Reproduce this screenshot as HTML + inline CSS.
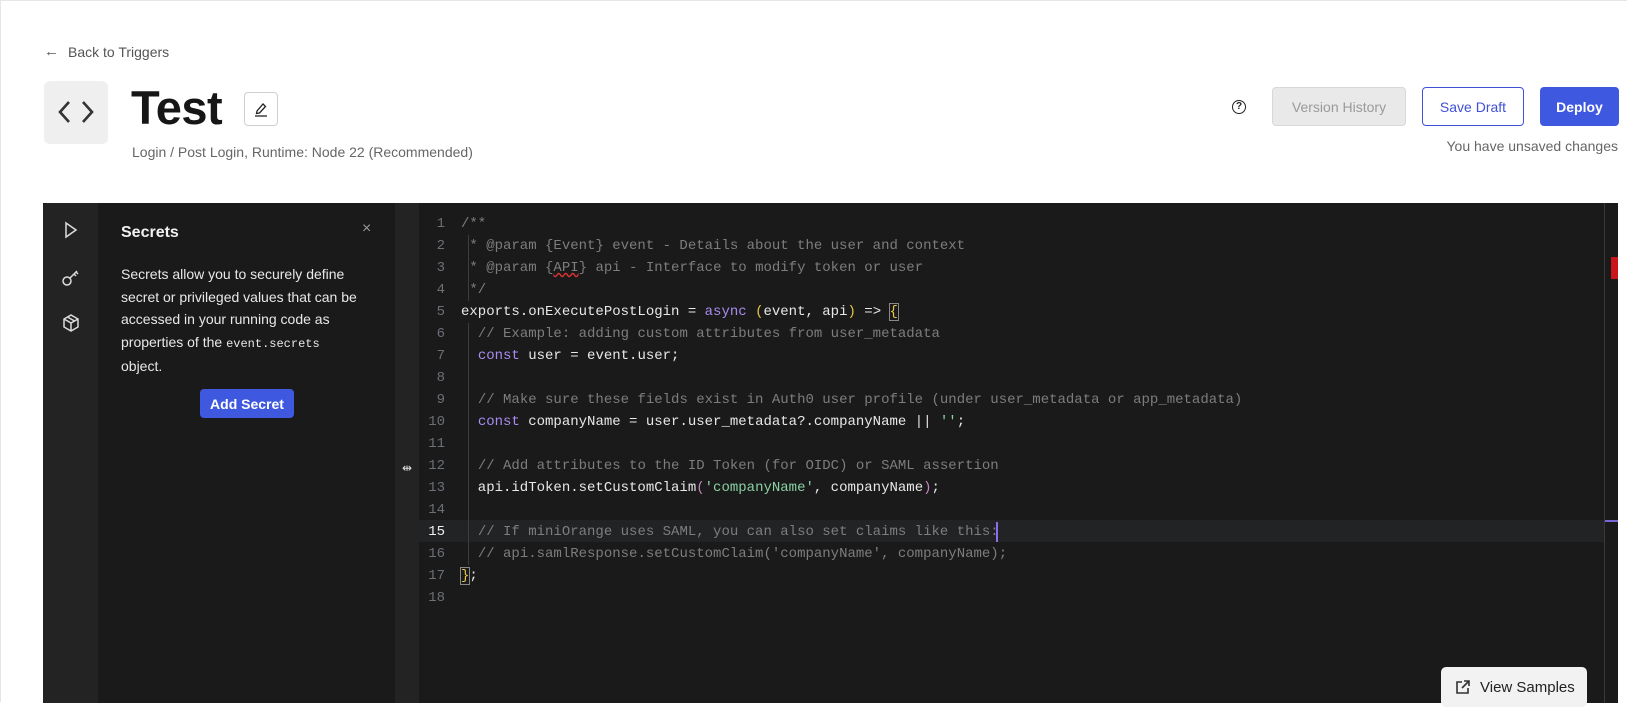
<!DOCTYPE html>
<html><head><meta charset="utf-8"><style>
*{box-sizing:border-box;margin:0;padding:0}
body{width:1627px;height:702px;overflow:hidden;background:#fff;font-family:"Liberation Sans",sans-serif;position:relative;border-top:1px solid #e6e6e6;border-left:1px solid #e6e6e6}
.a{position:absolute}
.btn{position:absolute;display:flex;align-items:center;justify-content:center;font-size:14px;border-radius:4px}
.code{position:absolute;left:460px;font-family:"Liberation Mono",monospace;font-size:14px;color:#e8e8e8;white-space:pre;line-height:22px}
.ln{position:absolute;left:418px;width:26px;text-align:right;font-family:"Liberation Mono",monospace;font-size:14px;color:#6b6f76;line-height:22px}
.c{color:#7d7d7d}.k{color:#a88cf0}.s{color:#8ad1a4}.y{color:#e7c547}.p{color:#c586c0}
</style></head><body>
<div class="a" style="left:43px;top:42px;font-size:15px;color:#555">←</div>
<div class="a" style="left:67px;top:43px;font-size:14px;color:#555">Back to Triggers</div>
<div class="a" style="left:43px;top:80px;width:64px;height:63px;background:#efefef;border-radius:6px"></div>
<svg class="a" style="left:55px;top:95px" width="40" height="32" viewBox="0 0 40 32"><path d="M13 6 L4 16 L13 26 M27 6 L36 16 L27 26" stroke="#333" stroke-width="2.6" fill="none"/></svg>
<div class="a" style="left:130px;top:79px;font-size:47px;font-weight:600;color:#161616;letter-spacing:-0.5px">Test</div>
<div class="a" style="left:243px;top:91px;width:34px;height:34px;border:1px solid #cfcfcf;border-radius:4px"></div>
<svg class="a" style="left:252px;top:99px" width="16" height="18" viewBox="0 0 16 18"><path d="M4 11 L10 4 L12.5 6.5 L6.5 13 L3.5 13.5 Z" stroke="#222" stroke-width="1.3" fill="none"/><path d="M2 16 H14" stroke="#222" stroke-width="1.3"/></svg>
<div class="a" style="left:131px;top:143px;font-size:14px;color:#666">Login / Post Login, Runtime: Node 22 (Recommended)</div>

<div class="a" style="left:1231px;top:99px;width:14px;height:14px;border:1.6px solid #222;border-radius:50%;font-size:10px;font-weight:bold;text-align:center;line-height:11px;color:#222">?</div>
<div class="btn" style="left:1271px;top:86px;width:134px;height:39px;background:#e9e9e9;border:1px solid #d8d8d8;color:#9a9a9a">Version History</div>
<div class="btn" style="left:1421px;top:86px;width:102px;height:39px;background:#fff;border:1px solid #3f51d8;color:#3f51d8">Save Draft</div>
<div class="btn" style="left:1539px;top:86px;width:79px;height:39px;background:#3f58e0;color:#fff;font-weight:600">Deploy</div>
<div class="a" style="right:9px;top:137px;font-size:14px;color:#666">You have unsaved changes</div>

<div class="a" style="left:42px;top:202px;width:1575px;height:500px;background:#1a1a1a"></div>
<div class="a" style="left:42px;top:202px;width:55px;height:500px;background:#232323;border-radius:4px 0 0 0"></div>
<div class="a" style="left:394px;top:202px;width:24px;height:500px;background:#232323"></div>
<svg class="a" style="left:62px;top:220px" width="16" height="18"><path d="M3 2 L13 9 L3 16 Z" stroke="#ddd" stroke-width="1.5" fill="none"/></svg>
<svg class="a" style="left:60px;top:266px" width="20" height="20"><circle cx="6" cy="14" r="4" stroke="#ddd" stroke-width="1.5" fill="none"/><path d="M9 11 L16 4 M13 7 L15 9 M15 5 L17 7" stroke="#ddd" stroke-width="1.5"/></svg>
<svg class="a" style="left:60px;top:312px" width="20" height="20"><path d="M10 2 L17 6 L17 14 L10 18 L3 14 L3 6 Z M3 6 L10 10 L17 6 M10 10 L10 18 M6.5 4 L13.5 8" stroke="#ddd" stroke-width="1.5" fill="none"/></svg>
<div class="a" style="left:120px;top:223px;font-size:16px;font-weight:bold;color:#f2f2f2">Secrets</div>
<div class="a" style="left:361px;top:219px;font-size:16px;color:#999">×</div>
<div class="a" style="left:120px;top:262px;width:250px;font-size:14px;line-height:22.5px;color:#e8e8e8">Secrets allow you to securely define secret or privileged values that can be accessed in your running code as properties of the <span style="font-family:'Liberation Mono',monospace;font-size:12px">event.secrets</span><br>object.</div>
<div class="btn" style="left:199px;top:388px;width:94px;height:29px;background:#3f58e0;color:#fff;font-weight:600">Add Secret</div>
<div class="a" style="left:401px;top:460px;font-size:12px;color:#ddd">⇹</div>

<div class="a" style="left:418px;top:519px;width:1185px;height:22px;background:#222325"></div>
<div class="a" style="left:1603px;top:202px;width:1px;height:500px;background:#3a3a3a"></div>
<div class="a" style="left:1610px;top:256px;width:7px;height:22px;background:#c8161b"></div>
<div class="a" style="left:1604px;top:519px;width:13px;height:2px;background:#7a66d6"></div>
<div class="a" style="left:467px;top:234px;width:1px;height:66px;background:#3d3d3d"></div>
<div class="a" style="left:467px;top:322px;width:1px;height:242px;background:#3d3d3d"></div>
<div class="a" style="left:995px;top:521px;width:2px;height:20px;background:#8c6cf0"></div>

<div class="ln" style="top:212px">1<br>2<br>3<br>4<br>5<br>6<br>7<br>8<br>9<br>10<br>11<br>12<br>13<br>14<br><span style="color:#eee">15</span><br>16<br>17<br>18</div>
<div class="code" style="top:212px"><span class="c">/**
 * @param {Event} event - Details about the user and context
 * @param {<span style="text-decoration:underline wavy #d33">API</span>} api - Interface to modify token or user
 */</span>
exports.onExecutePostLogin = <span class="k">async</span> <span class="y">(</span>event, api<span class="y">)</span> =&gt; <span class="y" style="outline:1px solid #888">{</span>
  <span class="c">// Example: adding custom attributes from user_metadata</span>
  <span class="k">const</span> user = event.user;

  <span class="c">// Make sure these fields exist in Auth0 user profile (under user_metadata or app_metadata)</span>
  <span class="k">const</span> companyName = user.user_metadata?.companyName || <span class="s">''</span>;

  <span class="c">// Add attributes to the ID Token (for OIDC) or SAML assertion</span>
  api.idToken.setCustomClaim<span class="p">(</span><span class="s">'companyName'</span>, companyName<span class="p">)</span>;

  <span class="c">// If miniOrange uses SAML, you can also set claims like this:</span>
  <span class="c">// api.samlResponse.setCustomClaim('companyName', companyName);</span>
<span class="y" style="outline:1px solid #888">}</span>;
</div>

<div class="btn" style="left:1440px;top:666px;width:146px;height:40px;background:#f2f2f2;color:#222;font-size:15px;border-radius:5px;justify-content:flex-start;padding-left:14px">
<svg width="16" height="16" style="margin-right:9px"><path d="M7 3 H2 V14 H13 V9 M9 2 H14 V7 M14 2 L7 9" stroke="#333" stroke-width="1.6" fill="none"/></svg>View Samples</div>
</body></html>
